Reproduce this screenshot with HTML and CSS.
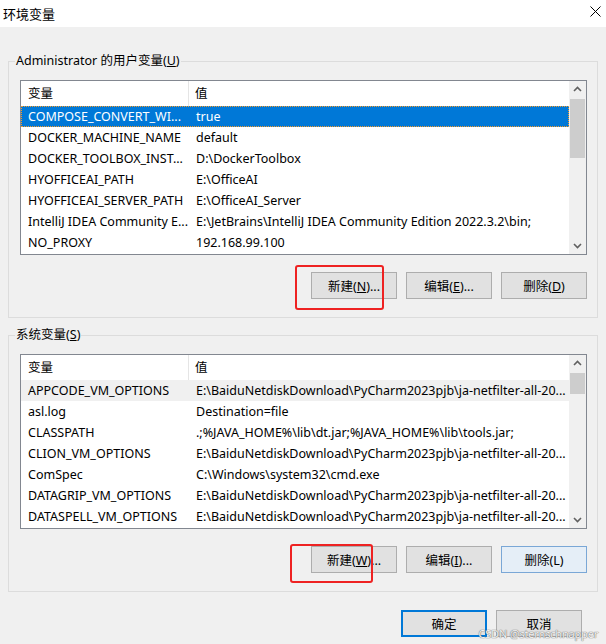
FILE: index.html
```html
<!DOCTYPE html>
<html lang="zh-CN">
<head>
    <meta charset="UTF-8">
    <title>环境变量</title>
    <link rel="stylesheet" href="styles.css">
</head>
<body>

<div class="titlebar">
    <span class="title">环境变量</span>
    <svg class="close" width="11" height="11" viewBox="0 0 11 11">
        <path d="M0.5 0.5 L10.5 10.5 M10.5 0.5 L0.5 10.5" stroke="#000" stroke-width="1" fill="none"/>
    </svg>
</div>

<div class="dialog">

    <!-- user variables -->
    <fieldset class="group group-user">
        <legend>Administrator 的用户变量(<u>U</u>)</legend>
        <div class="listview">
            <div class="lv-body">
                <div class="lv-row lv-head"><span class="c1">变量</span><span class="c2">值</span></div>
                <div class="lv-row selected"><span class="c1">COMPOSE_CONVERT_WI...</span><span class="c2">true</span></div>
                <div class="lv-row"><span class="c1">DOCKER_MACHINE_NAME</span><span class="c2">default</span></div>
                <div class="lv-row"><span class="c1">DOCKER_TOOLBOX_INST...</span><span class="c2">D:\DockerToolbox</span></div>
                <div class="lv-row"><span class="c1">HYOFFICEAI_PATH</span><span class="c2">E:\OfficeAI</span></div>
                <div class="lv-row"><span class="c1">HYOFFICEAI_SERVER_PATH</span><span class="c2">E:\OfficeAI_Server</span></div>
                <div class="lv-row"><span class="c1">IntelliJ IDEA Community E...</span><span class="c2">E:\JetBrains\IntelliJ IDEA Community Edition 2022.3.2\bin;</span></div>
                <div class="lv-row"><span class="c1">NO_PROXY</span><span class="c2">192.168.99.100</span></div>
            </div>
            <div class="scrollbar">
                <svg class="arrow" width="17" height="17" viewBox="0 0 17 17"><path d="M5 10 L8.5 6.5 L12 10" stroke="#606060" stroke-width="1.6" fill="none"/></svg>
                <div class="track"><div class="thumb thumb-user"></div></div>
                <svg class="arrow" width="17" height="17" viewBox="0 0 17 17"><path d="M5 7 L8.5 10.5 L12 7" stroke="#606060" stroke-width="1.6" fill="none"/></svg>
            </div>
        </div>
        <div class="btn-row">
            <button class="btn">新建(<u>N</u>)...<span class="mark mark-user"></span></button>
            <button class="btn">编辑(<u>E</u>)...</button>
            <button class="btn">删除(<u>D</u>)</button>
        </div>
    </fieldset>

    <!-- system variables -->
    <fieldset class="group group-sys">
        <legend>系统变量(<u>S</u>)</legend>
        <div class="listview">
            <div class="lv-body">
                <div class="lv-row lv-head"><span class="c1">变量</span><span class="c2">值</span></div>
                <div class="lv-row inactive"><span class="c1">APPCODE_VM_OPTIONS</span><span class="c2">E:\BaiduNetdiskDownload\PyCharm2023pjb\ja-netfilter-all-20...</span></div>
                <div class="lv-row"><span class="c1">asl.log</span><span class="c2">Destination=file</span></div>
                <div class="lv-row"><span class="c1">CLASSPATH</span><span class="c2">.;%JAVA_HOME%\lib\dt.jar;%JAVA_HOME%\lib\tools.jar;</span></div>
                <div class="lv-row"><span class="c1">CLION_VM_OPTIONS</span><span class="c2">E:\BaiduNetdiskDownload\PyCharm2023pjb\ja-netfilter-all-20...</span></div>
                <div class="lv-row"><span class="c1">ComSpec</span><span class="c2">C:\Windows\system32\cmd.exe</span></div>
                <div class="lv-row"><span class="c1">DATAGRIP_VM_OPTIONS</span><span class="c2">E:\BaiduNetdiskDownload\PyCharm2023pjb\ja-netfilter-all-20...</span></div>
                <div class="lv-row"><span class="c1">DATASPELL_VM_OPTIONS</span><span class="c2">E:\BaiduNetdiskDownload\PyCharm2023pjb\ja-netfilter-all-20...</span></div>
            </div>
            <div class="scrollbar">
                <svg class="arrow" width="17" height="17" viewBox="0 0 17 17"><path d="M5 10 L8.5 6.5 L12 10" stroke="#606060" stroke-width="1.6" fill="none"/></svg>
                <div class="track"><div class="thumb thumb-sys"></div></div>
                <svg class="arrow" width="17" height="17" viewBox="0 0 17 17"><path d="M5 7 L8.5 10.5 L12 7" stroke="#606060" stroke-width="1.6" fill="none"/></svg>
            </div>
        </div>
        <div class="btn-row">
            <button class="btn">新建(<u>W</u>)...<span class="mark mark-sys"></span></button>
            <button class="btn">编辑(<u>I</u>)...</button>
            <button class="btn hot">删除(L)</button>
        </div>
    </fieldset>

    <div class="footer">
        <button class="btn default">确定</button>
        <button class="btn">取消</button>
    </div>

    <div class="watermark">CSDN @sternschnapper</div>
</div>

</body>
</html>
```

FILE: styles.css
```css
body {
    margin: 0;
    background-color: #f0f0f0;
    font-family: "Noto Sans", "Noto Sans CJK SC", sans-serif;
    font-size: 12.5px;
    color: #000;
}

.titlebar {
    height: 27px;
    background-color: #fff;
    display: flex;
    align-items: center;
    justify-content: space-between;
    padding: 0 5px 0 3px;
}

.title {
    font-size: 13px;
}

.close {
    margin-top: -5px;
}

.dialog {
    position: relative;
    padding-top: 25px;
    height: 617px;
    box-sizing: border-box;
}

.group {
    margin: 0 8px;
    padding: 10px 10px 18px 11px;
    border: 1px solid #dcdcdc;
    min-width: 0;
}

.group-sys {
    margin-top: 8px;
}

.group legend {
    margin-left: -5px;
    padding: 0 1px;
    line-height: 18px;
}

.listview {
    display: flex;
    border: 1px solid #828790;
    background-color: #fff;
    height: 173px;
}

.lv-body {
    flex: 1;
    min-width: 0;
    overflow: hidden;
}

.lv-row {
    display: grid;
    grid-template-columns: 168px 1fr;
    height: 21px;
    line-height: 21px;
    white-space: nowrap;
}

.lv-row span {
    overflow: hidden;
}

.lv-row .c1 {
    padding-left: 7px;
}

.lv-row .c2 {
    padding-left: 7px;
}

.lv-head {
    height: 25px;
    line-height: 25px;
}

.lv-head .c1 {
    border-right: 1px solid #e5e5e5;
}

.lv-head .c2 {
    padding-left: 6px;
}

.lv-row.selected {
    background-color: #0078d7;
    color: #fff;
    outline: 1px dotted #f59c2c;
    outline-offset: -1px;
}

.lv-row.inactive {
    background-color: #f0f0f0;
}

.scrollbar {
    width: 17px;
    background-color: #f0f0f0;
    display: flex;
    flex-direction: column;
}

.arrow {
    display: block;
    flex: none;
}

.track {
    flex: 1;
}

.thumb {
    background-color: #cdcdcd;
    margin: 0 1px;
}

.thumb-user {
    margin-top: 1px;
    height: 59px;
}

.thumb-sys {
    margin-top: 1px;
    height: 21px;
}

.btn-row {
    display: flex;
    justify-content: flex-end;
    gap: 9px;
    margin-top: 17px;
}

.btn {
    position: relative;
    width: 86px;
    height: 27px;
    padding: 0;
    border: 1px solid #adadad;
    background-color: #e1e1e1;
    font-family: inherit;
    font-size: 12.5px;
    color: #000;
}

.btn.hot {
    background-color: #e5eef7;
    border-color: #7aa7d6;
}

.btn.default {
    border: 2px solid #0078d7;
}

.mark {
    position: absolute;
    border: 2px solid #ee2222;
    border-radius: 3px;
}

.mark-user {
    left: -17px;
    top: -8px;
    width: 85px;
    height: 41px;
}

.mark-sys {
    left: -22px;
    top: -3px;
    width: 79px;
    height: 35px;
}

.footer {
    display: flex;
    justify-content: flex-end;
    gap: 9px;
    margin-top: 18px;
    padding-right: 24px;
}

.watermark {
    position: absolute;
    right: 8px;
    bottom: 3px;
    font-size: 11px;
    letter-spacing: -0.2px;
    color: #f4f4f4;
    text-shadow: 0 0 1px #666, 0 0 1px #666;
}
```
